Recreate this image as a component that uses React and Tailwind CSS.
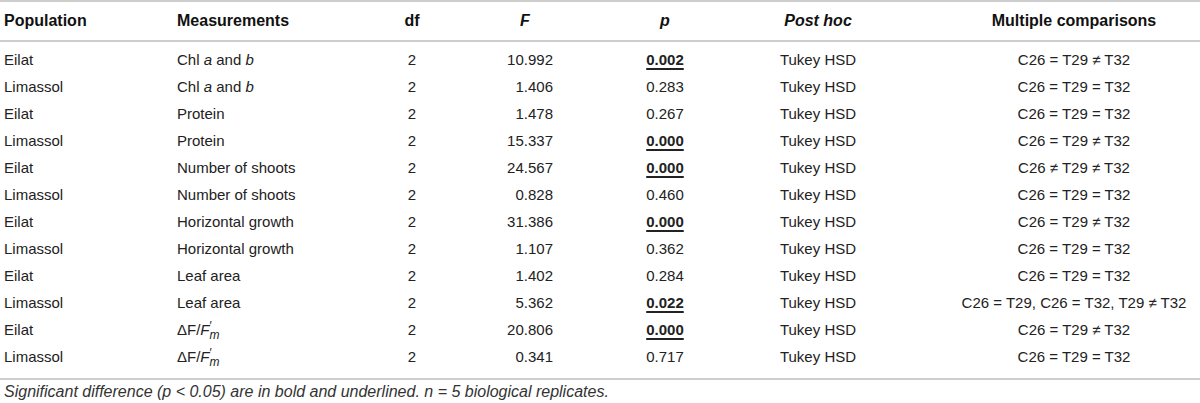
const rows = [
    ['Eilat', <>Chl <i>a</i> and <i>b</i></>, '10.992', '0.002', true, 'C26 = T29 ≠ T32'],
    ['Limassol', <>Chl <i>a</i> and <i>b</i></>, '1.406', '0.283', false, 'C26 = T29 = T32'],
    ['Eilat', 'Protein', '1.478', '0.267', false, 'C26 = T29 = T32'],
    ['Limassol', 'Protein', '15.337', '0.000', true, 'C26 = T29 ≠ T32'],
    ['Eilat', 'Number of shoots', '24.567', '0.000', true, 'C26 ≠ T29 ≠ T32'],
    ['Limassol', 'Number of shoots', '0.828', '0.460', false, 'C26 = T29 = T32'],
    ['Eilat', 'Horizontal growth', '31.386', '0.000', true, 'C26 = T29 ≠ T32'],
    ['Limassol', 'Horizontal growth', '1.107', '0.362', false, 'C26 = T29 = T32'],
    ['Eilat', 'Leaf area', '1.402', '0.284', false, 'C26 = T29 = T32'],
    ['Limassol', 'Leaf area', '5.362', '0.022', true, 'C26 = T29, C26 = T32, T29 ≠ T32'],
    ['Eilat', 'dF', '20.806', '0.000', true, 'C26 = T29 ≠ T32'],
    ['Limassol', 'dF', '0.341', '0.717', false, 'C26 = T29 = T32'],
];

function DeltaF() {
    return (
        <span className="inline-flex items-start">
            ΔF/<i>F</i>
            <span className="inline-flex flex-col leading-none text-[12px] mt-[1px]">
                <span className="h-[9px]">′</span>
                <i>m</i>
            </span>
        </span>
    );
}

export default function App() {
    return (
        <div className="w-[1200px] h-[403px] bg-white text-[#222] text-[15px]"
             style={{fontFamily: '"Liberation Sans", Arial, sans-serif'}}>

            {/* Header */}
            <div className="flex items-center h-[42px] pl-[4px] border-t-2 border-b-2 border-[#cdcdcd] font-bold text-[16px] text-[#111]">
                <div className="w-[173px]">Population</div>
                <div className="w-[195px]">Measurements</div>
                <div className="w-[80px] text-center">df</div>
                <div className="w-[146px] text-center"><i>F</i></div>
                <div className="w-[134px] text-center"><i>p</i></div>
                <div className="w-[172px] text-center"><i>Post hoc</i></div>
                <div className="flex-1 pl-[44px] text-center whitespace-nowrap">Multiple comparisons</div>
            </div>

            {/* Body */}
            <div className="pt-[5px] pb-[7px] pl-[4px] border-b-2 border-[#cdcdcd]">
                {rows.map((r, i) =>
                    <div key={i} className="flex items-center h-[27px] whitespace-nowrap">
                        <div className="w-[173px]">{r[0]}</div>
                        <div className="w-[195px]">{r[1] === 'dF' ? <DeltaF/> : r[1]}</div>
                        <div className="w-[80px] text-center">2</div>
                        <div className="w-[146px] text-right pr-[45px]">{r[2]}</div>
                        <div className="w-[134px] text-center">
                            {r[4] ?
                                <span className="font-bold underline underline-offset-[3px] decoration-[1.5px]">{r[3]}</span> :
                                r[3]}
                        </div>
                        <div className="w-[172px] text-center">Tukey HSD</div>
                        <div className="flex-1 pl-[44px] text-center">{r[5]}</div>
                    </div>)}
            </div>

            {/* Footnote */}
            <div className="pl-[4px] pt-[3px] leading-[18px] italic text-[16px] text-[#333]">
                Significant difference (<i>p</i> &lt; 0.05) are in bold and underlined. <i>n</i> = 5 biological replicates.
            </div>
        </div>
    );
}
